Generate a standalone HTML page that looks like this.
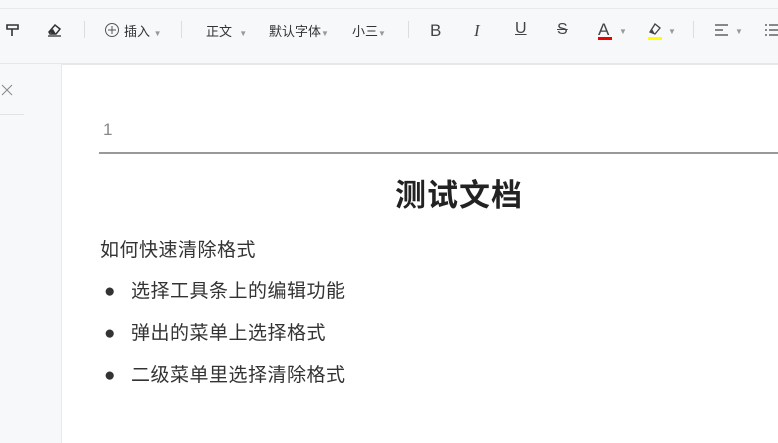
<!DOCTYPE html><html><head><meta charset="utf-8"><style>
body{margin:0;width:778px;height:442px;overflow:hidden;background:#f7f8fa;font-family:"Liberation Sans","Noto Sans CJK SC",sans-serif;position:relative}
.a{position:absolute}
.t{font-size:13px;color:#333;top:21px;white-space:nowrap}
.c{font-size:8px;color:#999}
.sep{position:absolute;top:21px;width:1px;height:17px;background:#ddd}
</style></head><body>
<div class="a" style="left:0;top:8px;width:778px;height:1px;background:#e8e9eb"></div>
<div class="a" style="left:0;top:63px;width:778px;height:1px;background:#e6e7e9"></div>
<svg class="a" style="left:5px;top:22px" width="16" height="16"><path d="M2 3h11v4H2zM7 7v7" stroke="#333" stroke-width="1.6" fill="none"/></svg>
<svg class="a" style="left:46px;top:22px" width="18" height="16"><path d="M3 10l6-7 5 4-4 5H4z" stroke="#333" stroke-width="1.5" fill="none"/><path d="M3 10l4 2h3l-3-5z" fill="#333"/><path d="M2 14h13" stroke="#333" stroke-width="1.3"/></svg>
<div class="sep" style="left:84px"></div>
<svg class="a" style="left:104px;top:22px" width="16" height="16"><circle cx="8" cy="8" r="6.5" stroke="#555" fill="none"/><path d="M8 4v8M4 8h8" stroke="#555"/></svg>
<div class="a t" style="left:124px">插入 <span class="c">▼</span></div>
<div class="sep" style="left:181px"></div>
<div class="a t" style="left:206px">正文 &nbsp;<span class="c">▼</span></div>
<div class="a t" style="left:269px">默认字体<span class="c">▼</span></div>
<div class="a t" style="left:352px">小三<span class="c">▼</span></div>
<div class="sep" style="left:408px"></div>
<div class="a" style="left:430px;top:21px;font-size:17px;color:#444">B</div>
<div class="a" style="left:474px;top:21px;font-size:17px;color:#444;font-style:italic;font-family:'Liberation Serif',serif">I</div>
<div class="a" style="left:515px;top:20px;font-size:16px;color:#444;text-decoration:underline">U</div>
<div class="a" style="left:557px;top:21px;font-size:16px;color:#444;text-decoration:line-through">S</div>
<div class="a" style="left:598px;top:20px;font-size:17px;color:#444">A</div>
<div class="a" style="left:598px;top:37px;width:14px;height:3px;background:#e00"></div>
<div class="a t" style="left:619px;top:22px"><span class="c">▼</span></div>
<svg class="a" style="left:647px;top:21px" width="16" height="16"><path d="M3 11l5-8 5 4-5 6z" stroke="#444" stroke-width="1.3" fill="none"/><path d="M3 11l5 2-3-5z" fill="#444"/></svg>
<div class="a" style="left:648px;top:37px;width:14px;height:3px;background:#ff0"></div>
<div class="a t" style="left:668px;top:22px"><span class="c">▼</span></div>
<div class="sep" style="left:693px"></div>
<svg class="a" style="left:714px;top:23px" width="16" height="14"><path d="M1 2h13M1 7h8M1 12h13" stroke="#444" stroke-width="1.3"/></svg>
<div class="a t" style="left:735px;top:22px"><span class="c">▼</span></div>
<svg class="a" style="left:764px;top:23px" width="14" height="14"><path d="M1 2h2M1 7h2M1 12h2M5 2h9M5 7h9M5 12h9" stroke="#444" stroke-width="1.3"/></svg>
<svg class="a" style="left:1px;top:84px" width="12" height="12"><path d="M1 1l10 10M11 1L1 11" stroke="#888" stroke-width="1"/></svg>
<div class="a" style="left:0;top:114px;width:24px;height:1px;background:#e2e3e5"></div>
<div class="a" style="left:61px;top:64px;width:717px;height:378px;background:#fff;border-left:1px solid #e8e8e8;border-top:1px solid #e8e8e8"></div>
<div class="a" style="left:103px;top:120px;font-size:17px;color:#888">1</div>
<div class="a" style="left:99px;top:152px;width:679px;height:2px;background:#999"></div>
<div class="a" style="left:395px;top:170px;font-size:31px;font-weight:bold;color:#222;letter-spacing:1px">测试文档</div>
<div class="a" style="left:100px;top:235px;font-size:19px;color:#333;letter-spacing:0.5px">如何快速清除格式</div>
<div class="a" style="left:104px;top:271px;font-size:19px;color:#333;line-height:42px;letter-spacing:0.5px">●<span style="margin-left:15px">选择工具条上的编辑功能</span><br>●<span style="margin-left:15px">弹出的菜单上选择格式</span><br>●<span style="margin-left:15px">二级菜单里选择清除格式</span></div>
</body></html>
